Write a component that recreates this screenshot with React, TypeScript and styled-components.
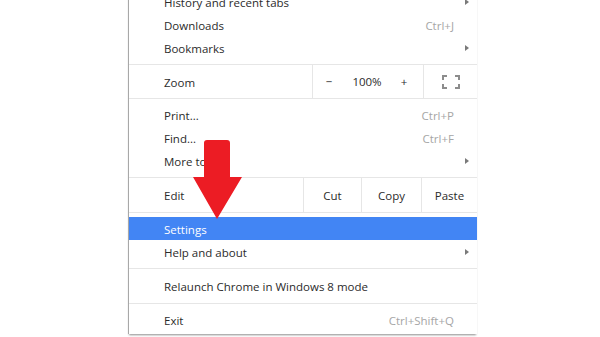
import React from 'react';
import styled, { createGlobalStyle } from 'styled-components';

const Global = createGlobalStyle`
  html, body { margin: 0; padding: 0; background: #ffffff; }
  body { font-family: "Open Sans", "Noto Sans", sans-serif; }
`;

const Page = styled.div`
  position: relative;
  width: 600px;
  height: 337px;
  overflow: hidden;
  background: #ffffff;
`;

const Menu = styled.div`
  margin-left: 128px;
  margin-top: -14px;
  width: 348px;
  border-left: 1px solid #a8a8a8;
  background: #ffffff;
  box-shadow: 0 2px 2px -1px rgba(0, 0, 0, 0.45);
  color: #2b2b2b;
  font-size: 11.5px;
`;

const Group = styled.div<{ $pt: number; $pb: number; $last?: boolean }>`
  padding: ${(p) => p.$pt}px 0 ${(p) => p.$pb}px;
  border-bottom: ${(p) => (p.$last ? 'none' : '1px solid #e6e6e6')};
`;

const Item = styled.div<{ $active?: boolean }>`
  display: flex;
  align-items: center;
  box-sizing: border-box;
  height: 23px;
  padding: 1px 8px 0 35px;
  background: ${(p) => (p.$active ? '#4285f4' : 'transparent')};
  color: ${(p) => (p.$active ? '#ffffff' : 'inherit')};
`;

const Label = styled.span`
  flex: 1;
  white-space: nowrap;
`;

const Shortcut = styled.span`
  color: #a6a6a6;
  margin-right: 15px;
  white-space: nowrap;
`;

const SubArrow = styled.span`
  width: 0;
  height: 0;
  margin-top: -1px;
  border-left: 4px solid #7a7a7a;
  border-top: 3.5px solid transparent;
  border-bottom: 3.5px solid transparent;
`;

const ControlRow = styled.div<{ $h: number }>`
  display: flex;
  align-items: stretch;
  height: ${(p) => p.$h}px;
  border-bottom: 1px solid #e6e6e6;
`;

const ControlLabel = styled.div`
  flex: 1;
  display: flex;
  align-items: center;
  padding: 1px 0 0 35px;
`;

const Cell = styled.div<{ $w: number }>`
  width: ${(p) => p.$w}px;
  box-sizing: border-box;
  border-left: 1px solid #e6e6e6;
  display: flex;
  align-items: center;
  justify-content: center;
`;

const ZoomBox = styled.div`
  width: 111px;
  box-sizing: border-box;
  border-left: 1px solid #e6e6e6;
  display: grid;
  grid-template-columns: 32px 44px 30px;
  align-items: center;
  justify-items: center;
`;

const ZoomBtn = styled.span`
  color: #2b2b2b;
`;

const Overlay = styled.svg`
  position: absolute;
  left: 0;
  top: 0;
  pointer-events: none;
`;

const FullscreenIcon = () => (
  <svg width="18" height="14" viewBox="0 0 18 14">
    <g fill="none" stroke="#8c8c8c" strokeWidth="2">
      <path d="M1 5 V1 H5" />
      <path d="M13 1 H17 V5" />
      <path d="M17 9 V13 H13" />
      <path d="M5 13 H1 V9" />
    </g>
  </svg>
);

export default function App() {
  return (
    <Page>
      <Global />
      <Menu>
        <Group $pt={4} $pb={5}>
          <Item>
            <Label>History and recent tabs</Label>
            <SubArrow />
          </Item>
          <Item>
            <Label>Downloads</Label>
            <Shortcut>Ctrl+J</Shortcut>
          </Item>
          <Item>
            <Label>Bookmarks</Label>
            <SubArrow />
          </Item>
        </Group>
        <ControlRow $h={33}>
          <ControlLabel>Zoom</ControlLabel>
          <ZoomBox>
            <ZoomBtn>−</ZoomBtn>
            <ZoomBtn>100%</ZoomBtn>
            <ZoomBtn>+</ZoomBtn>
          </ZoomBox>
          <Cell $w={54}>
            <FullscreenIcon />
          </Cell>
        </ControlRow>
        <Group $pt={4} $pb={5}>
          <Item>
            <Label>Print...</Label>
            <Shortcut>Ctrl+P</Shortcut>
          </Item>
          <Item>
            <Label>Find...</Label>
            <Shortcut>Ctrl+F</Shortcut>
          </Item>
          <Item>
            <Label>More tools</Label>
            <SubArrow />
          </Item>
        </Group>
        <ControlRow $h={34}>
          <ControlLabel>Edit</ControlLabel>
          <Cell $w={58}>Cut</Cell>
          <Cell $w={60}>Copy</Cell>
          <Cell $w={56}>Paste</Cell>
        </ControlRow>
        <Group $pt={4} $pb={5}>
          <Item $active>
            <Label>Settings</Label>
          </Item>
          <Item>
            <Label>Help and about</Label>
            <SubArrow />
          </Item>
        </Group>
        <Group $pt={5} $pb={6}>
          <Item>
            <Label>Relaunch Chrome in Windows 8 mode</Label>
          </Item>
        </Group>
        <Group $pt={4} $pb={3} $last>
          <Item>
            <Label>Exit</Label>
            <Shortcut>Ctrl+Shift+Q</Shortcut>
          </Item>
        </Group>
      </Menu>
      <Overlay width="600" height="337" viewBox="0 0 600 337">
        <path
          d="M204 143 Q204 140 207 140 L227 140 Q230 140 230 143 L230 177 L242 177 L217 219 L193 177 L204 177 Z"
          fill="#ec1c24"
        />
      </Overlay>
    </Page>
  );
}
